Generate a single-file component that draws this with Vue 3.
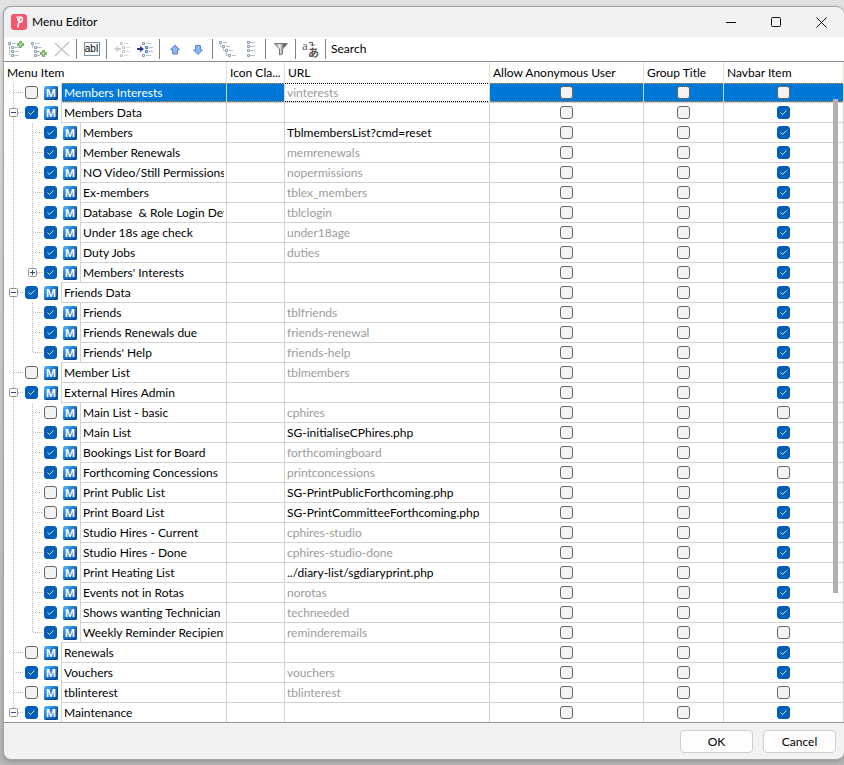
<script setup>
import { reactive } from 'vue'

// name, level, checked, url, url is custom, navbar item, expander
const source = [
  ['Members Interests', 0, 0, 'vinterests', 0, 0, ''],
  ['Members Data', 0, 1, '', 0, 1, '-'],
  ['Members', 1, 1, 'TblmembersList?cmd=reset', 1, 1, ''],
  ['Member Renewals', 1, 1, 'memrenewals', 0, 1, ''],
  ['NO Video/Still Permissions', 1, 1, 'nopermissions', 0, 1, ''],
  ['Ex-members', 1, 1, 'tblex_members', 0, 1, ''],
  ['Database  & Role Login Details', 1, 1, 'tblclogin', 0, 1, ''],
  ['Under 18s age check', 1, 1, 'under18age', 0, 1, ''],
  ['Duty Jobs', 1, 1, 'duties', 0, 1, ''],
  ["Members' Interests", 1, 1, '', 0, 1, '+'],
  ['Friends Data', 0, 1, '', 0, 1, '-'],
  ['Friends', 1, 1, 'tblfriends', 0, 1, ''],
  ['Friends Renewals due', 1, 1, 'friends-renewal', 0, 1, ''],
  ["Friends' Help", 1, 1, 'friends-help', 0, 1, ''],
  ['Member List', 0, 0, 'tblmembers', 0, 1, ''],
  ['External Hires Admin', 0, 1, '', 0, 1, '-'],
  ['Main List - basic', 1, 0, 'cphires', 0, 0, ''],
  ['Main List', 1, 1, 'SG-initialiseCPhires.php', 1, 1, ''],
  ['Bookings List for Board', 1, 1, 'forthcomingboard', 0, 1, ''],
  ['Forthcoming Concessions', 1, 1, 'printconcessions', 0, 0, ''],
  ['Print Public List', 1, 0, 'SG-PrintPublicForthcoming.php', 1, 1, ''],
  ['Print Board List', 1, 0, 'SG-PrintCommitteeForthcoming.php', 1, 1, ''],
  ['Studio Hires - Current', 1, 1, 'cphires-studio', 0, 1, ''],
  ['Studio Hires - Done', 1, 1, 'cphires-studio-done', 0, 1, ''],
  ['Print Heating List', 1, 0, '../diary-list/sgdiaryprint.php', 1, 1, ''],
  ['Events not in Rotas', 1, 1, 'norotas', 0, 1, ''],
  ['Shows wanting Technician', 1, 1, 'techneeded', 0, 1, ''],
  ['Weekly Reminder Recipients', 1, 1, 'reminderemails', 0, 0, ''],
  ['Renewals', 0, 0, '', 0, 1, ''],
  ['Vouchers', 0, 1, 'vouchers', 0, 1, ''],
  ['tblinterest', 0, 0, 'tblinterest', 0, 0, ''],
  ['Maintenance', 0, 1, '', 0, 1, '-'],
]

const rows = reactive(
  source.map(([name, level, on, url, custom, navbar, expander], i) => ({
    id: 'item-' + i,
    name,
    level,
    on: !!on,
    url,
    custom: !!custom,
    anonymous: false,
    group: false,
    navbar: !!navbar,
    expander,
    selected: i === 0,
    last: level === 1 && source[i + 1]?.[1] === 0,
    end: i === source.length - 1,
  }))
)
</script>

<template>
  <main class="window">
    <header class="titlebar">
      <svg class="logo" width="16" height="16" viewBox="0 0 16 16" aria-hidden="true">
        <rect width="16" height="16" rx="3" fill="#f4566c" />
        <path d="M5.500 4 6.800 3v3.500M8.500 3h.8c3 0 2.800 4.600-.3 5.200H8M8.800 3.500 6.800 13.500" fill="none" stroke="#fff" stroke-width="1.500" />
      </svg>
      <h1>Menu Editor</h1>
      <div class="controls">
        <button type="button" aria-label="Minimize"><svg width="11" height="11"><path d="M0 5.500h10" /></svg></button>
        <button type="button" aria-label="Maximize"><svg width="11" height="11"><rect x=".5" y=".5" width="9" height="9" rx="1" /></svg></button>
        <button type="button" aria-label="Close"><svg width="11" height="11"><path d="M.5.5l10 10M10.500.5l-10 10" /></svg></button>
      </div>
    </header>

    <div class="toolbar" role="toolbar" aria-label="Menu tools">
      <button type="button" aria-label="Add item">
        <svg width="16" height="16" viewBox="0 0 16 16">
          <path d="M1.500 4v10M4 2.500h4M6 6.500h5M6 10.500h5M6 14.500h5" class="wire" />
          <path d="M.5 1.500h2v2h-2zM3.500 5.500h2v2h-2zM3.500 9.500h2v2h-2zM3.500 13.500h2v2h-2z" class="node" />
          <path d="M11.500.5h2v2h2v2h-2v2h-2v-2h-2v-2h2z" class="plus" />
        </svg>
      </button>
      <button type="button" aria-label="Add child item">
        <svg width="16" height="16" viewBox="0 0 16 16">
          <path d="M1.500 4v3M4 2.500h5M6 6.500h5M6 10.500h3M6 14.500h3" class="wire" />
          <path d="M.5 1.500h2v2h-2zM3.500 5.500h2v2h-2zM3.500 9.500h2v2h-2zM3.500 13.500h2v2h-2z" class="node" />
          <path d="M11.500 9.500h2v2h2v2h-2v2h-2v-2h-2v-2h2z" class="plus" />
        </svg>
      </button>
      <button type="button" aria-label="Delete">
        <svg width="16" height="16" viewBox="0 0 16 16"><path d="M1 2l14 13M15 1L1 15" fill="none" stroke="#c4c4c4" stroke-width="1.500" /></svg>
      </button>
      <i class="sep"></i>
      <button type="button" aria-label="Rename"><span class="abl">abl</span></button>
      <i class="sep"></i>
      <button type="button" aria-label="Outdent">
        <svg width="16" height="16" viewBox="0 0 16 16" class="dim">
          <path d="M10 2.500h4M12 6.500h4M12 10.500h4M10 14.500h4" class="wire" />
          <path d="M6.500 1.500h2v2h-2zM8.500 5.500h2v2h-2zM8.500 9.500h2v2h-2zM6.500 13.500h2v2h-2z" class="node" />
          <path d="M7 7v2H4v2L0 8l4-3v2z" fill="#aaa" />
        </svg>
      </button>
      <button type="button" aria-label="Indent">
        <svg width="16" height="16" viewBox="0 0 16 16">
          <path d="M9 2.500h5M12 6.500h4M12 10.500h4M9 14.500h5" class="wire" />
          <path d="M5.500 1.500h2v2h-2zM5.500 13.500h2v2h-2z" class="node" />
          <path d="M8.500 5.500h2v2h-2zM8.500 9.500h2v2h-2z" fill="#b5cfff" stroke="#4a78cc" />
          <path d="M0 7v2h3v2l4-3-4-3v2z" fill="#263b91" />
        </svg>
      </button>
      <i class="sep"></i>
      <button type="button" aria-label="Move up">
        <svg width="16" height="16" viewBox="0 0 16 16"><path d="M8 4l4.500 4.500h-2V13h-5V8.500h-2z" class="arrow" /></svg>
      </button>
      <button type="button" aria-label="Move down">
        <svg width="16" height="16" viewBox="0 0 16 16"><path d="M8 13.500L3.500 9h2V4.500h5V9h2z" class="arrow" /></svg>
      </button>
      <i class="sep"></i>
      <button type="button" aria-label="Expand all">
        <svg width="17" height="16" viewBox="0 0 17 16">
          <path d="M4 1.500h4M7 5.500h4M10 9.500h4M13 14.500h4M1.500 3v2.500H4M4.500 7v2.500H7M7.500 11v3.500H10" class="wire" />
          <path d="M.5.5h2v2h-2zM3.500 4.500h2v2h-2zM6.500 8.500h2v2h-2zM9.500 13.500h2v2h-2z" class="node" />
        </svg>
      </button>
      <button type="button" aria-label="Collapse all">
        <svg width="16" height="16" viewBox="0 0 16 16">
          <path d="M7 1.500h5M7 5.500h5M7 9.500h5M7 14.500h5" class="wire" />
          <path d="M4.500.5h2v2h-2zM4.500 4.500h2v2h-2zM4.500 8.500h2v2h-2zM4.500 13.500h2v2h-2z" class="node" />
        </svg>
      </button>
      <i class="sep"></i>
      <button type="button" aria-label="Filter">
        <svg width="16" height="16" viewBox="0 0 16 16">
          <defs><linearGradient id="metal"><stop offset="0" stop-color="#777" /><stop offset=".4" stop-color="#f4f4f4" /><stop offset=".75" stop-color="#555" /><stop offset="1" stop-color="#777" /></linearGradient></defs>
          <path d="M1.500 2.500h13L9.500 8v5l-3 1V8z" fill="url(#metal)" stroke="#777" />
        </svg>
      </button>
      <i class="sep"></i>
      <button type="button" aria-label="Translate">
        <span class="translate"><b>a</b><svg width="7" height="6"><path d="M0 1.500h3.500V5M1.500 3l2 2 2-2" fill="none" stroke="#555" /></svg><b lang="ja">あ</b></span>
      </button>
      <i class="sep"></i>
      <button type="button" class="search">Search</button>
    </div>

    <div class="grid-area">
      <table>
        <colgroup>
          <col class="c-item" /><col class="c-icon" /><col class="c-url" /><col class="c-anon" /><col class="c-group" /><col />
        </colgroup>
        <thead>
          <tr>
            <th>Menu Item</th><th>Icon Cla...</th><th>URL</th><th>Allow Anonymous User</th><th>Group Title</th><th>Navbar Item</th>
          </tr>
        </thead>
        <tbody>
          <tr v-for="row in rows" :key="row.id" :class="{ selected: row.selected }">
            <td class="tree">
              <div class="branch">
                <svg v-if="row.level" class="guide" width="19" height="20"><path d="M9.500 0v20" /></svg>
                <svg class="guide" width="19" height="20">
                  <path :d="row.last || row.end ? 'M9.500 0v10' : 'M9.500 0v20'" />
                  <path d="M10 9.500h9" />
                  <g v-if="row.expander">
                    <rect x="5.500" y="5.500" width="8" height="8" rx="1" />
                    <path class="sign" :d="row.expander === '+' ? 'M7 9.500h5M9.500 7v5' : 'M7 9.500h5'" />
                  </g>
                </svg>
                <input :id="row.id" v-model="row.on" type="checkbox" class="check" />
                <span class="icon" :class="{ closing: row.last }"><span class="badge" aria-hidden="true">M</span></span>
                <label :for="row.id" class="name"><span>{{ row.name }}</span></label>
              </div>
            </td>
            <td></td>
            <td class="url" :class="{ custom: row.custom }">{{ row.url }}</td>
            <td class="flag"><input v-model="row.anonymous" type="checkbox" class="check" :aria-label="row.name + ': allow anonymous user'" /></td>
            <td class="flag"><input v-model="row.group" type="checkbox" class="check" :aria-label="row.name + ': group title'" /></td>
            <td class="flag"><input v-model="row.navbar" type="checkbox" class="check" :aria-label="row.name + ': navbar item'" /></td>
          </tr>
        </tbody>
      </table>
      <div class="thumb"></div>
    </div>

    <footer class="actions">
      <button type="button">OK</button>
      <button type="button">Cancel</button>
    </footer>
  </main>
</template>

<style>
body {
  margin: 0;
  min-height: 100vh;
  background: linear-gradient(#e2e2e2, #d2d2d2 40%, #b8b8b8);
}
#app {
  display: flow-root;
}
</style>

<style scoped>
.window {
  margin: 6px 0 5px 3px;
  border: 1px solid #a3a3a3;
  border-right: 0;
  border-radius: 8px;
  overflow: hidden;
  background: #f2f2f2;
  box-shadow: 0 2px 5px rgba(0, 0, 0, 0.2);
  color: #000;
  font: 12px/16px Lato, "Open Sans", sans-serif;
}
button {
  font: inherit;
  color: inherit;
}
.titlebar {
  display: flex;
  align-items: center;
  height: 30px;
  padding-left: 7px;
}
.titlebar h1 {
  margin: 0 auto 0 5px;
  font-size: 12px;
  font-weight: 400;
}
.controls {
  display: flex;
}
.controls button {
  display: grid;
  place-items: center;
  width: 45px;
  height: 30px;
  padding: 0;
  border: 0;
  background: none;
}
.controls svg {
  fill: none;
  stroke: #111;
}
.toolbar {
  display: flex;
  align-items: center;
  height: 24px;
  background: #fff;
  border-bottom: 1px solid #8c8c8c;
}
.toolbar button {
  display: grid;
  place-items: center;
  width: 23px;
  height: 22px;
  padding: 0;
  border: 0;
  background: none;
}
.toolbar .search {
  width: auto;
  padding: 0 2px;
}
.sep {
  width: 1px;
  height: 20px;
  margin: 0 3px;
  background: #808080;
}
.wire {
  fill: none;
  stroke: #b3c2d0;
}
.node {
  fill: #fff;
  stroke: #8b9bb0;
}
.plus {
  fill: #a5d896;
  stroke: #6aa65f;
}
.dim {
  filter: grayscale(1);
  opacity: 0.6;
}
.arrow {
  fill: #8fb4f3;
  stroke: #5d82d6;
}
.abl {
  width: 14px;
  height: 12px;
  border: 1px solid #7590a8;
  font: 10px/11px "Liberation Sans", sans-serif;
}
.translate {
  display: grid;
  grid-template-columns: 6px 11px;
  grid-template-rows: 6px 10px;
  color: #555;
}
.translate b {
  font: 12px/10px "Liberation Serif", serif;
}
.translate svg {
  margin-left: 1px;
}
.translate b:last-child {
  grid-column: 2;
  font: bold 11px/10px "Noto Sans CJK JP", sans-serif;
}
.grid-area {
  position: relative;
  background: #fff;
  border-bottom: 1px solid #979797;
}
table {
  width: 100%;
  table-layout: fixed;
  border-spacing: 0;
}
.c-item { width: 223px; }
.c-icon { width: 58px; }
.c-url { width: 205px; }
.c-anon { width: 154px; }
.c-group { width: 80px; }
th,
td {
  box-sizing: border-box;
  border-right: 1px solid #d2d2d2;
  overflow: hidden;
  white-space: nowrap;
}
th {
  height: 21px;
  padding: 0 0 0 3px;
  border-color: #e6dfd6;
  font-weight: 400;
  text-align: left;
}
td {
  height: 20px;
  padding: 0;
  border-bottom: 1px solid #d2d2d2;
}
.tree {
  border-bottom: 0;
}
.branch {
  display: flex;
  height: 20px;
}
tr:last-child td,
tr:last-child .name {
  border-bottom: 0;
}
tbody tr:last-child td,
tbody tr:last-child .branch {
  height: 19px;
}
.guide {
  flex: none;
  fill: none;
  stroke: #b8b8b8;
  stroke-dasharray: 1 1;
}
.guide rect {
  fill: #fff;
  stroke: #919191;
  stroke-dasharray: none;
}
.guide .sign {
  stroke: #33477e;
  stroke-dasharray: none;
}
.check {
  appearance: none;
  box-sizing: border-box;
  flex: none;
  display: block;
  width: 13px;
  height: 13px;
  margin: 0;
  border: 1px solid #666;
  border-radius: 3px;
  background: #f3f3f3;
}
.check:checked {
  border-color: #005fb8;
  background: #005fb8 url("data:image/svg+xml,%3Csvg xmlns='http://www.w3.org/2000/svg' viewBox='0 0 11 11'%3E%3Cpath d='M2.500 5.500l2 2 4-4' fill='none' stroke='%23d5e8fa'/%3E%3C/svg%3E");
}
.branch .check {
  margin: 3px 0 0 2px;
}
.flag .check {
  margin: 0 auto;
}
.icon {
  box-sizing: border-box;
  flex: none;
  width: 23px;
  height: 20px;
  padding: 3px 0 0 6px;
}
.closing {
  background: linear-gradient(#d2d2d2, #d2d2d2) right bottom / 19px 1px no-repeat;
}
.badge {
  display: block;
  width: 14px;
  height: 14px;
  border-radius: 2px;
  background: linear-gradient(135deg, #5cb8f5, #1473d2 50%, #0a4fa5);
  box-shadow: inset -1px -1px #0b4791;
  color: #fff;
  font: bold 11px/14px "Open Sans", sans-serif;
  text-align: center;
}
.name {
  box-sizing: border-box;
  flex: 1;
  min-width: 0;
  padding: 0 2px;
  border-left: 1px solid #d2d2d2;
  border-bottom: 1px solid #d2d2d2;
  line-height: 19px;
  white-space: pre;
}
.name span {
  display: block;
  overflow: hidden;
}
.url {
  padding-left: 2px;
  color: #9b9b9b;
}
.url.custom {
  color: #000;
}
.selected td:not(.tree, .url) {
  background: repeating-linear-gradient(90deg, #d88a30 0 1px, #0078d7 1px 2px) top / 100% 1px no-repeat,
    repeating-linear-gradient(90deg, #d88a30 0 1px, #0078d7 1px 2px) bottom / 100% 1px no-repeat,
    #0078d7;
  background-clip: padding-box;
}
.selected .name {
  background: repeating-linear-gradient(90deg, #d88a30 0 1px, #0078d7 1px 2px) top / 100% 1px no-repeat,
    repeating-linear-gradient(90deg, #d88a30 0 1px, #0078d7 1px 2px) bottom / 100% 1px no-repeat,
    #0078d7;
  background-clip: padding-box;
  color: #fff;
}
.selected .url {
  background: repeating-linear-gradient(90deg, #000 0 1px, #fff 1px 2px) top / 100% 1px no-repeat,
    repeating-linear-gradient(90deg, #000 0 1px, #fff 1px 2px) bottom / 100% 1px no-repeat;
}
.thumb {
  position: absolute;
  top: 37px;
  right: 6px;
  bottom: 129px;
  width: 5px;
  background: #b1b1b1;
}
.actions {
  display: flex;
  justify-content: flex-end;
  gap: 10px;
  padding: 7px 8px 6px;
}
.actions button {
  box-sizing: border-box;
  width: 73px;
  height: 23px;
  padding: 0;
  border: 1px solid #cfcfcf;
  border-radius: 4px;
  background: #fdfdfd;
}
</style>
